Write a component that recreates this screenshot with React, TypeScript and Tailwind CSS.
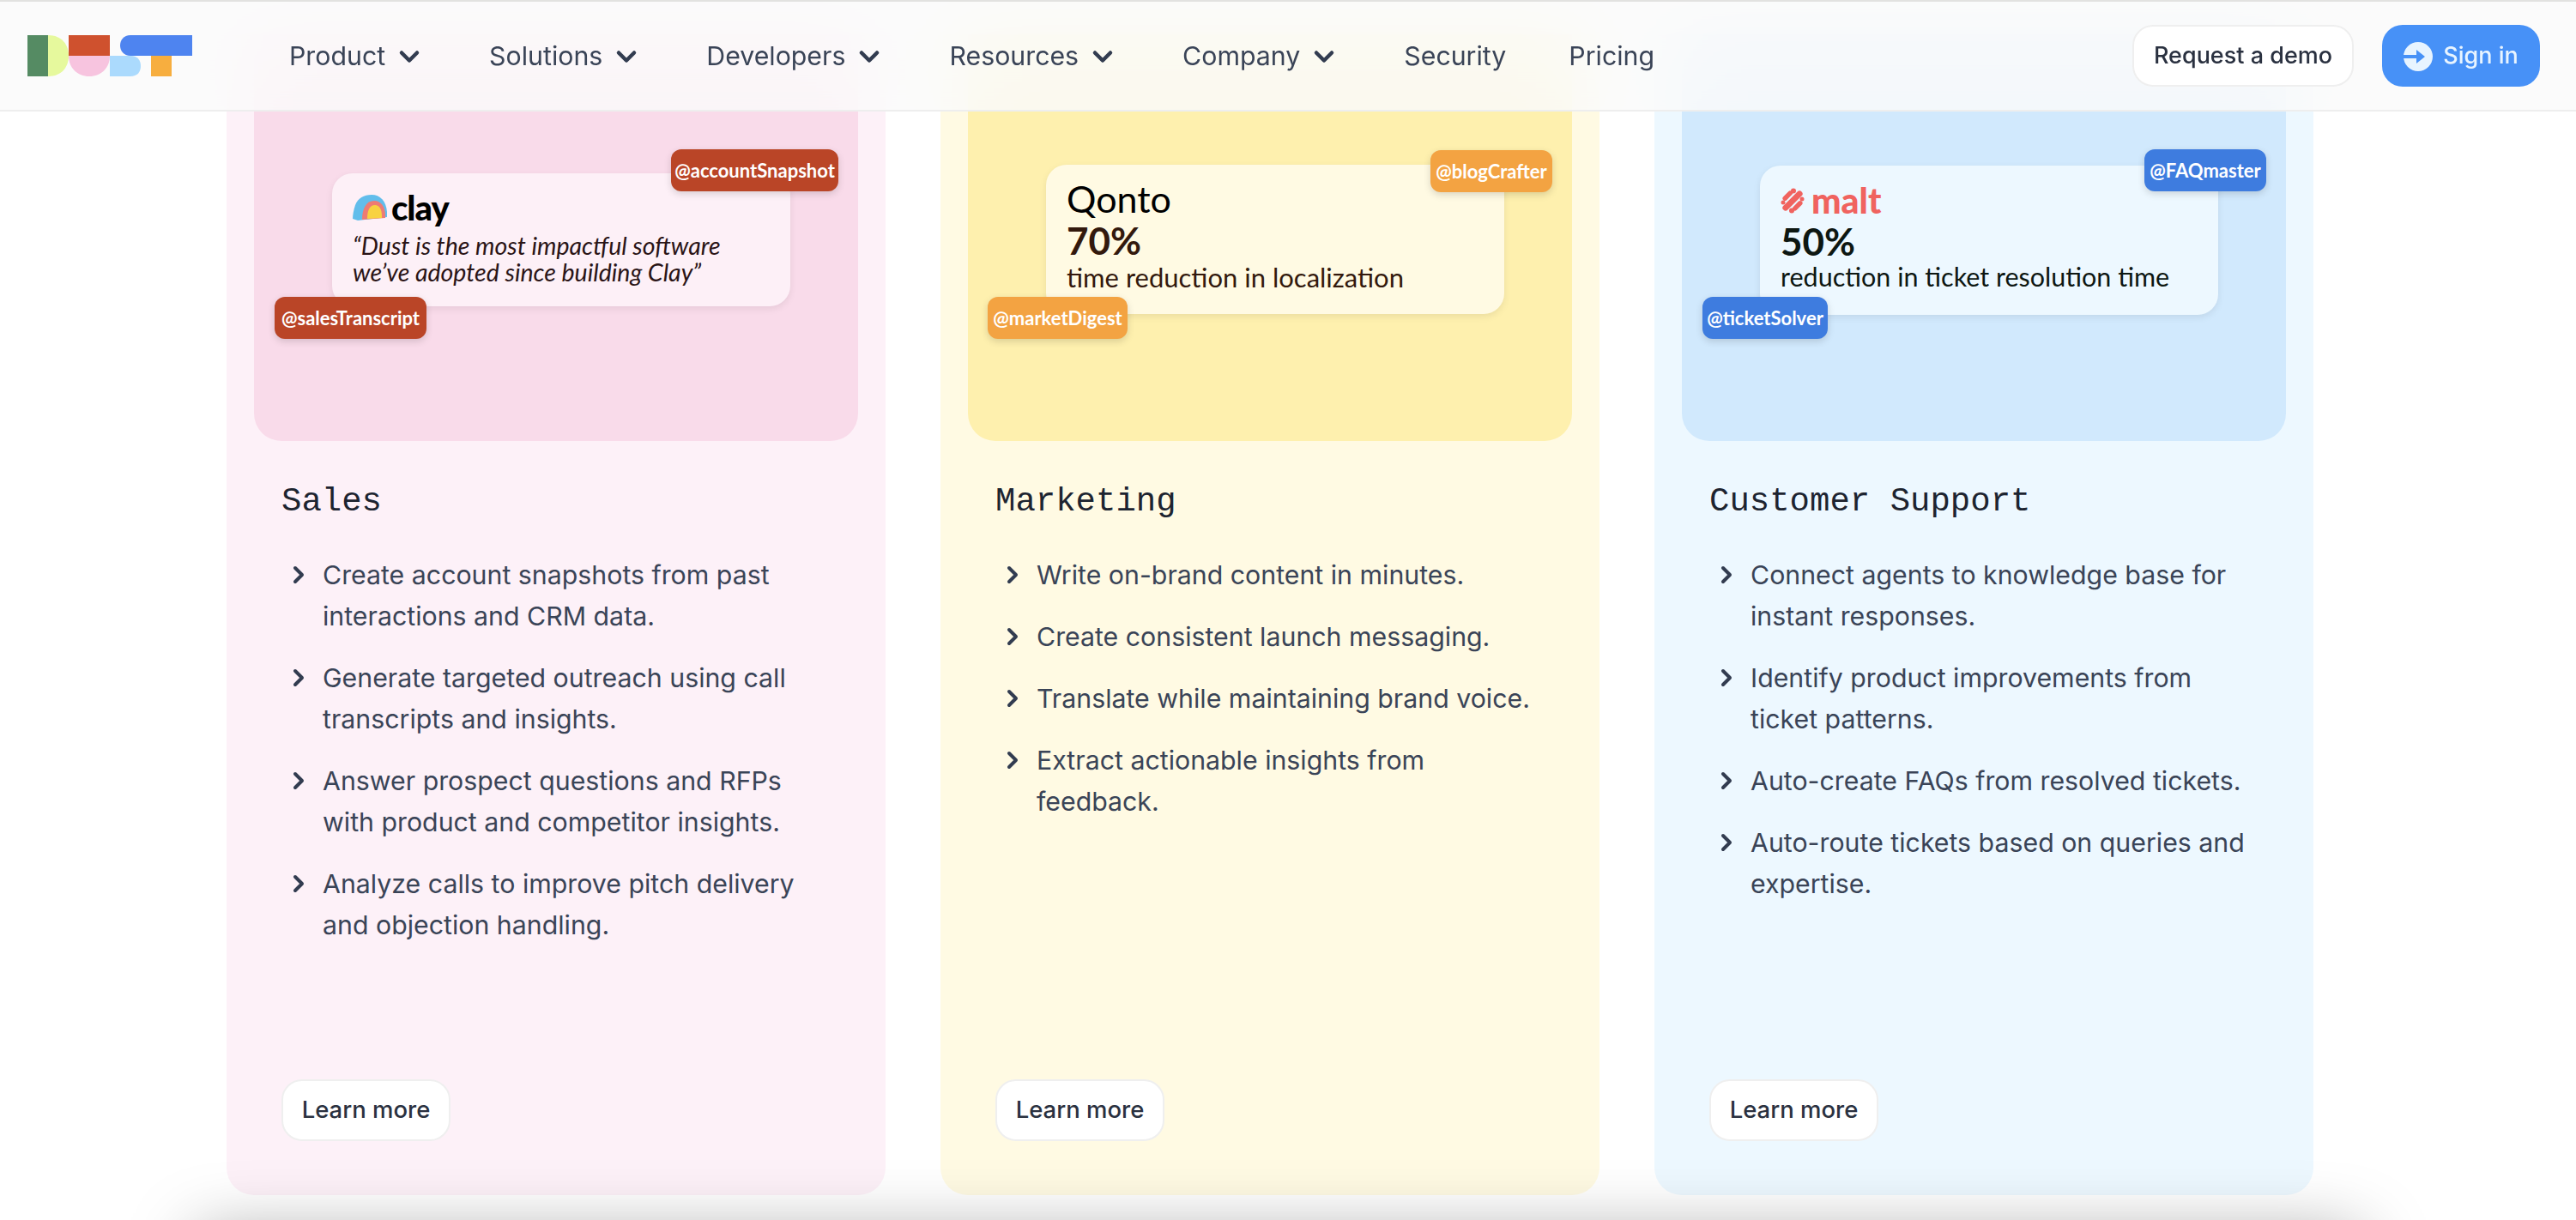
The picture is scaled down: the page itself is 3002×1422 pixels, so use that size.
import { ChevronDown, ChevronRight } from "lucide-react";

const sans = "font-['Inter','Liberation_Sans',sans-serif]";

const navItems = [
  { label: "Product", menu: true },
  { label: "Solutions", menu: true },
  { label: "Developers", menu: true },
  { label: "Resources", menu: true },
  { label: "Company", menu: true },
  { label: "Security", menu: false },
  { label: "Pricing", menu: false },
];

const Logo = () => (
  <svg width="192" height="48" viewBox="0 0 192 48" className="shrink-0">
    <rect x="0" y="0" width="24" height="48" fill="#558B63" />
    <path d="M24 0 C40 0 48 11 48 24 C48 37 40 48 24 48 Z" fill="#E6F99D" />
    <rect x="48" y="0" width="48" height="24" fill="#CF512E" />
    <path d="M48 24 H96 C96 38 86 48 72 48 C58 48 48 38 48 24 Z" fill="#F7C4DF" />
    <path d="M96 24 H120 C129 24 132 30 132 36 C132 43 128 48 120 48 H96 Z" fill="#ABDAFD" />
    <path d="M120 0 H192 V24 H120 C112 24 108 18 108 12 C108 6 112 0 120 0 Z" fill="#4E84F0" />
    <rect x="144" y="24" width="24" height="24" fill="#F7AE3F" />
  </svg>
);

const Header = () => (
  <header
    className={`absolute top-0 left-0 z-10 flex h-[130px] w-full items-center border-t-2 border-b-2 border-t-[#e2e2e0] border-b-[#eeeeee] bg-[#fafafa]/85 pl-8 pr-[42px] backdrop-blur-2xl ${sans}`}
  >
    <Logo />
    <nav className="mt-[2px] ml-[113px] flex items-center text-[30.3px] text-[#3a4457]">
      <ul className="flex items-center gap-[73px]">
        {navItems.map((item) => (
          <li key={item.label} className="flex items-center gap-2.5">
            <span>{item.label}</span>
            {item.menu && <ChevronDown size={36} strokeWidth={3} className="mr-[2px] text-[#323c50]" />}
          </li>
        ))}
      </ul>
    </nav>
    <div className="ml-auto flex items-center gap-[33px]">
      <button className="h-[72px] w-[258px] rounded-3xl border-2 border-[#efefef] bg-white pt-px text-[27px] font-medium text-[#2a3140]">
        Request a demo
      </button>
      <button className="flex h-[72px] w-[184px] items-center justify-center gap-3 rounded-3xl bg-[#4791f7] pt-px text-[27px] font-medium text-[#e8f4ff]">
        <svg width="34" height="34" viewBox="0 0 34 34">
          <circle cx="17" cy="17" r="17" fill="#e8f4ff" />
          <path d="M0 15 H15 V9 L25 17 L15 25 V19 H0 Z" fill="#4791f7" />
        </svg>
        Sign in
      </button>
    </div>
  </header>
);

const Chip = ({ label, color, className }: { label: string; color: string; className: string }) => (
  <div
    className={`absolute flex h-[49px] items-center justify-center rounded-xl font-['Lato',sans-serif] text-[22px] font-bold text-white shadow-[0_3px_8px_rgba(0,0,0,0.15)] ${color} ${className}`}
  >
    {label}
  </div>
);

const ClayLogo = () => (
  <div className="flex h-[38px] items-center gap-[5px]">
    <svg width="40" height="30" viewBox="0 0 40 30">
      <path d="M0 28 C0 24 1 18 3 12 C6 4 13 0 22 0 C32 0 39 7 40 20 V26 L6 30 Z" fill="#62BDEB" />
      <path d="M11 29 C11 16 16 7 25 7 C33 7 38 14 38 24 V27 Z" fill="#EE7B74" />
      <path d="M17 28 C17 18 20 12 26 12 C31 12 34 17 34 25 V27 Z" fill="#F8D241" />
    </svg>
    <span className="font-['Lato',sans-serif] text-[40px] leading-none font-black tracking-tight text-black">clay</span>
  </div>
);

const MaltLogo = () => (
  <div className="flex h-[41px] items-center gap-2">
    <svg width="28" height="30" viewBox="0 0 28 30">
      <g fill="#F0635F">
        <rect x="-1" y="11.5" width="30" height="7" rx="3.5" transform="rotate(-45 14 15)" />
        <rect x="1" y="6.5" width="14" height="5.5" rx="2.75" transform="rotate(-45 8 9)" />
        <rect x="13" y="18" width="14" height="5.5" rx="2.75" transform="rotate(-45 20 21)" />
        <circle cx="15" cy="3.5" r="3" />
        <circle cx="13" cy="26.5" r="3" />
        <circle cx="3" cy="17" r="2.5" />
        <circle cx="25" cy="13" r="2.5" />
      </g>
    </svg>
    <span className="font-['Lato',sans-serif] text-[41px] leading-none font-black text-[#F0635F]">malt</span>
  </div>
);

const cards = [
  {
    title: "Sales",
    cardBg: "bg-[#fdf1f8]",
    imageBg: "bg-[#f9dbea]",
    panelBg: "bg-[#fdf0f7]",
    panelPos: "mt-[162px] ml-[91px] h-[155px]",
    chipColor: "bg-[#ba4527]",
    chips: [
      { label: "@accountSnapshot", className: "top-[134px] left-[486px] w-[195px]" },
      { label: "@salesTranscript", className: "top-[306px] left-[24px] w-[177px]" },
    ],
    items: [
      "Create account snapshots from past interactions and CRM data.",
      "Generate targeted outreach using call transcripts and insights.",
      "Answer prospect questions and RFPs with product and competitor insights.",
      "Analyze calls to improve pitch delivery and objection handling.",
    ],
  },
  {
    title: "Marketing",
    cardBg: "bg-[#fffae3]",
    imageBg: "bg-[#fef0ae]",
    panelBg: "bg-[#fffae3]",
    panelPos: "mt-[152px] ml-[91px] h-[174px]",
    chipColor: "bg-[#f3a342]",
    chips: [
      { label: "@blogCrafter", className: "top-[135px] left-[539px] w-[142px]" },
      { label: "@marketDigest", className: "top-[306px] left-[23px] w-[163px]" },
    ],
    items: [
      "Write on-brand content in minutes.",
      "Create consistent launch messaging.",
      "Translate while maintaining brand voice.",
      "Extract actionable insights from feedback.",
    ],
  },
  {
    title: "Customer Support",
    cardBg: "bg-[#edf8ff]",
    imageBg: "bg-[#d1e9fd]",
    panelBg: "bg-[#edf8ff]",
    panelPos: "mt-[153px] ml-[91px] h-[174px]",
    chipColor: "bg-[#3e7cdf]",
    chips: [
      { label: "@FAQmaster", className: "top-[134px] left-[539px] w-[142px]" },
      { label: "@ticketSolver", className: "top-[306px] left-[24px] w-[146px]" },
    ],
    items: [
      "Connect agents to knowledge base for instant responses.",
      "Identify product improvements from ticket patterns.",
      "Auto-create FAQs from resolved tickets.",
      "Auto-route tickets based on queries and expertise.",
    ],
  },
];

const PanelContent = ({ title }: { title: string }) => {
  if (title === "Sales") {
    return (
      <div className="flex flex-col gap-[10px] pt-[21px] pl-6">
        <ClayLogo />
        <p className="font-['Lato',sans-serif] text-[28.5px] leading-[31px] text-[#2a1416] italic">
          “Dust is the most impactful software
          <br />
          we’ve adopted since building Clay”
        </p>
      </div>
    );
  }
  if (title === "Marketing") {
    return (
      <div className="flex flex-col pt-[15px] pl-6 font-['Lato',sans-serif] text-[#33190d]">
        <span className="text-[43px] leading-[50px] text-black">Qonto</span>
        <span className="text-[44px] leading-[46px] font-bold">70%</span>
        <span className="text-[31px] leading-[40px]">time reduction in localization</span>
      </div>
    );
  }
  return (
    <div className="flex flex-col pt-[20px] pl-6 font-['Lato',sans-serif] text-[#0d1712]">
      <MaltLogo />
      <span className="mt-[4px] text-[44px] leading-[46px] font-bold">50%</span>
      <span className="text-[30.5px] leading-[36px]">reduction in ticket resolution time</span>
    </div>
  );
};

const Card = ({ card }: { card: (typeof cards)[number] }) => (
  <article className={`flex h-[1353px] w-[768px] flex-col rounded-b-[32px] px-8 pb-[63px] ${card.cardBg} ${sans}`}>
    <div className={`relative h-[474px] rounded-b-[32px] ${card.imageBg}`}>
      <div className={`w-[534px] overflow-hidden rounded-[24px] shadow-[0_3px_8px_rgba(0,0,0,0.08)] ${card.panelBg} ${card.panelPos}`}>
        <PanelContent title={card.title} />
      </div>
      {card.chips.map((chip) => (
        <Chip key={chip.label} label={chip.label} color={card.chipColor} className={chip.className} />
      ))}
    </div>
    <div className="flex flex-1 flex-col px-8">
      <h3 className="mt-[47px] font-['Liberation_Mono',monospace] text-[39px] leading-[48px] text-[#1d2430]">{card.title}</h3>
      <ul className="mt-[37px] flex flex-col gap-6 pl-1 pr-px">
        {card.items.map((item) => (
          <li key={item} className="flex gap-3 text-[30.3px] leading-[48px] text-[#3a4457]">
            <ChevronRight size={32} strokeWidth={3} className="mt-2 shrink-0 text-[#323c50]" />
            <span>{item}</span>
          </li>
        ))}
      </ul>
      <button className="mt-auto h-[72px] w-[197px] rounded-3xl border-2 border-[#efefef] bg-white text-[27.5px] font-medium text-[#2a3140]">
        Learn more
      </button>
    </div>
  </article>
);

export default function App() {
  return (
    <div className="relative h-[1422px] w-[3002px] overflow-hidden bg-white">
      <Header />
      <main className="flex gap-16 pt-10 pl-[264px]">
        {cards.map((card) => (
          <Card key={card.title} card={card} />
        ))}
      </main>
      {/* dark haze rising from the bottom edge */}
      <div className="pointer-events-none absolute top-[1440px] left-[230px] h-40 w-[2520px] shadow-[0_0_80px_rgba(0,0,0,0.36)]" />
    </div>
  );
}
